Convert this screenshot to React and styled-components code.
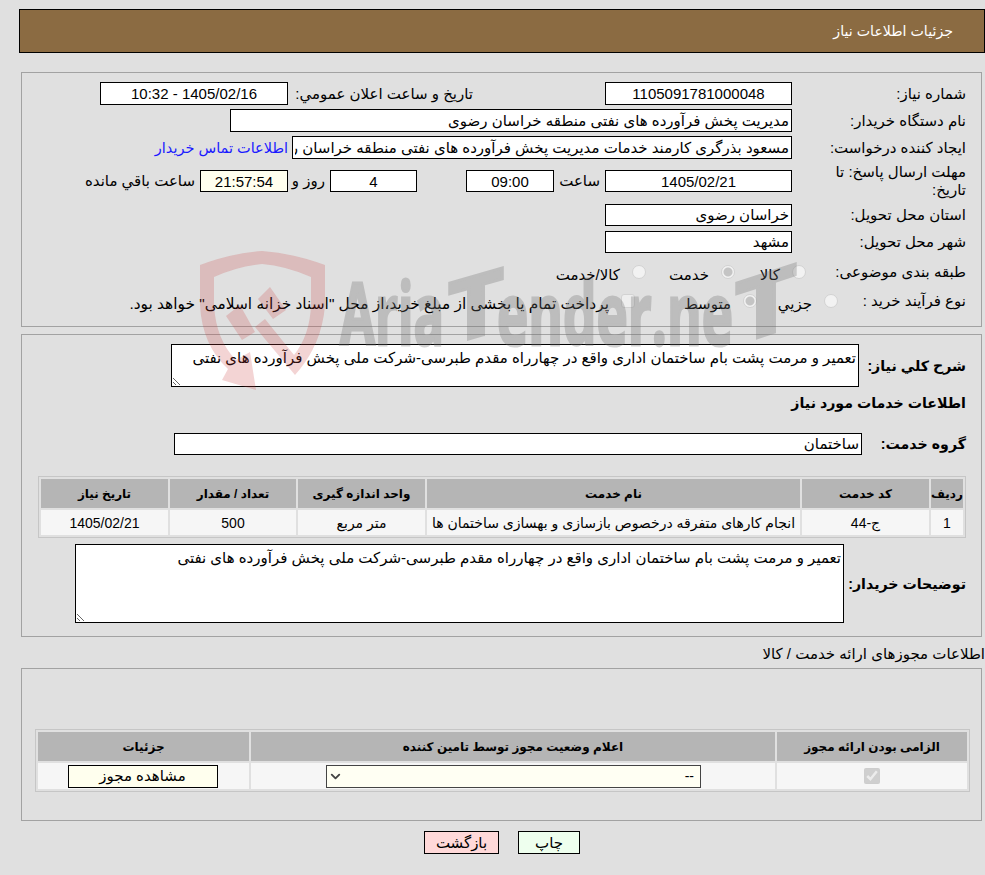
import styled, { createGlobalStyle } from "styled-components";
import { ChevronDown } from "lucide-react";

const GlobalStyle = createGlobalStyle`
  html, body {
    margin: 0;
    padding: 0;
    background: #e0e0e0;
  }
  body, input, select, textarea, button {
    font-family: "Liberation Sans", "DejaVu Sans", sans-serif;
    font-size: 15px;
    color: #000;
  }
`;

const Page = styled.div`
  position: relative;
  width: 985px;
  height: 875px;
  padding-top: 9px;
  box-sizing: border-box;
  direction: rtl;
  overflow: hidden;
`;

const Header = styled.div`
  display: flex;
  align-items: center;
  box-sizing: border-box;
  height: 44px;
  margin: 0 0 0 19px;
  width: 966px;
  padding-right: 31px;
  background: #8b6b42;
  border: 1px solid #000;
  color: #fff;
  font-size: 14.2px;
`;

const Panel = styled.div`
  box-sizing: border-box;
  width: 961px;
  margin-right: 3px;
  margin-top: ${({ $top }) => $top || 0}px;
  padding-top: ${({ $pt }) => $pt}px;
  padding-bottom: ${({ $pb }) => $pb}px;
  border: 1px solid #a2a2a2;
`;

const Row = styled.div`
  display: flex;
  align-items: center;
  min-height: ${({ $h }) => $h || 23}px;
  margin-top: ${({ $top }) => $top || 0}px;
`;

const Label = styled.div`
  flex: none;
  box-sizing: border-box;
  width: ${({ $w }) => $w || 189}px;
  padding-right: 15px;
  line-height: 18px;
  font-weight: ${({ $bold }) => ($bold ? "bold" : "normal")};
  font-size: ${({ $bold }) => ($bold ? 14.2 : 15)}px;
  white-space: ${({ $bold }) => ($bold ? "nowrap" : "normal")};
`;

const Caption = styled.div`
  flex: none;
  box-sizing: border-box;
  width: ${({ $w }) => ($w ? `${$w}px` : "auto")};
  padding-right: ${({ $start }) => $start || 5}px;
`;

const Field = styled.input`
  flex: none;
  box-sizing: border-box;
  width: ${({ $w }) => $w}px;
  height: ${({ $h }) => $h || 23}px;
  margin: 0;
  margin-right: ${({ $start }) => $start || 0}px;
  padding: 0 2px;
  border: 1px solid #000;
  border-radius: 0;
  outline: none;
  background: ${({ $tone }) => $tone || "#fff"};
  text-align: ${({ $center }) => ($center ? "center" : "right")};
`;

const Area = styled.textarea`
  flex: none;
  display: block;
  box-sizing: border-box;
  width: ${({ $w }) => $w}px;
  height: ${({ $h }) => $h}px;
  margin: 0;
  padding: 4px 2px;
  border: 1px solid #000;
  border-radius: 0;
  outline: none;
  background: #fff;
`;

const ContactLink = styled.a`
  margin-right: 4px;
  color: #1a1aff;
  font-size: 14.5px;
  text-decoration: none;
  cursor: pointer;
`;

const Choice = styled.label`
  flex: none;
  display: flex;
  align-items: center;
  width: ${({ $w }) => ($w ? `${$w}px` : "auto")};
`;

const ChoiceText = styled.span`
  margin-right: 12px;
  padding-top: 6px;
  font-size: ${({ $size }) => $size || 15}px;
`;

const Radio = styled.input.attrs({ type: "radio", disabled: true })`
  appearance: none;
  flex: none;
  width: 14px;
  height: 14px;
  margin: 0;
  border: 1px solid #d2d2d2;
  border-radius: 50%;
  background: ${({ checked }) =>
    checked ? "radial-gradient(circle, #c4c4c4 0 4px, #f2f2f2 5px)" : "#f2f2f2"};
`;

const Square = styled.input.attrs({ type: "checkbox", disabled: true })`
  appearance: none;
  flex: none;
  width: 14px;
  height: 14px;
  margin: 0;
  border: 1px solid #d2d2d2;
  border-radius: 3px;
  background: #eeeeee;
`;

const Grid = styled.table`
  box-sizing: border-box;
  width: ${({ $w }) => $w}px;
  margin-right: ${({ $side }) => $side}px;
  margin-top: ${({ $top }) => $top || 0}px;
  table-layout: fixed;
  border-collapse: separate;
  border-spacing: 2px;
  border: 1px solid #c6c6c6;
`;

const HeadCell = styled.th`
  height: 29px;
  padding: 0;
  background: #b5b5b5;
  font-size: 12px;
  font-weight: bold;
  text-align: center;
`;

const BodyCell = styled.td`
  height: ${({ $h }) => $h}px;
  padding: 0 2px;
  background: #f6f6f6;
  font-size: 14px;
  text-align: center;
  white-space: nowrap;
  overflow: hidden;
`;

const Tick = styled.input.attrs({ type: "checkbox", disabled: true, defaultChecked: true })`
  display: block;
  width: 16px;
  height: 16px;
  margin: 0 auto;
`;

const SelectBox = styled.div`
  position: relative;
  width: 375px;
  height: 23px;
  margin-right: 72px;
`;

const StatusSelect = styled.select`
  appearance: none;
  display: block;
  box-sizing: border-box;
  width: 100%;
  height: 100%;
  padding: 0 6px;
  border: 1px solid #444;
  border-radius: 0;
  background: #fffff3;
  font-size: 14px;
`;

const SelectArrow = styled(ChevronDown)`
  position: absolute;
  left: 2px;
  top: 4px;
  color: #444;
  pointer-events: none;
`;

const ActionButton = styled.button`
  flex: none;
  box-sizing: border-box;
  width: ${({ $w }) => $w}px;
  height: 23px;
  margin: 0;
  margin-right: ${({ $start }) => $start || 0}px;
  padding: 0;
  border: 1px solid #000;
  border-radius: 0;
  background: ${({ $tone }) => $tone};
  text-align: center;
`;

const LicenseTitle = styled.div`
  height: 17px;
  margin-top: 8px;
  margin-bottom: 6px;
  line-height: 17px;
`;

const Buttons = styled.div`
  display: flex;
  margin-top: 10px;
  padding-right: 405px;
`;

const Watermark = styled.svg`
  position: absolute;
  left: 195px;
  top: 245px;
  pointer-events: none;
`;

const serviceColumns = [32, 127, 373, 127, 126, 127];
const licenseColumns = [190, 524, 211];

function LogoMark() {
  return (
    <Watermark width="640" height="150" viewBox="195 245 640 150">
      <g fill="#c83c3c" fillOpacity="0.22">
        <path d="M200 265 Q232 253 262 251 Q292 253 325 265 L325 305 Q322 345 295 375 L255 327 L265 319 L294 355 Q310 335 311 305 L311 277 Q286 266 262 264 Q238 266 214 277 L214 305 Q216 340 236 360 L250 352 L256 390 L222 380 L228 369 Q202 345 200 305 Z" />
        <path d="M226 316 L240 305 L255 332 L242 340 Z" />
        <path d="M258 299 L270 287 L286 310 L273 319 Z" />
      </g>
      <g
        fill="#6e6e6e"
        stroke="#6e6e6e"
        strokeWidth="3"
        opacity="0.3"
        fontFamily="'Open Sans', sans-serif"
        fontWeight="700"
        fontSize="86"
      >
        <text direction="ltr" x="340" y="345" textLength="104" lengthAdjust="spacingAndGlyphs">
          Aria
        </text>
        <text
          direction="ltr"
          x="448"
          y="345"
          textLength="56"
          lengthAdjust="spacingAndGlyphs"
          transform="translate(448 345) skewY(-16) translate(-448 -345)"
        >
          T
        </text>
        <text direction="ltr" x="497" y="345" textLength="236" lengthAdjust="spacingAndGlyphs">
          ender.ne
        </text>
        <text
          direction="ltr"
          x="735"
          y="345"
          textLength="62"
          lengthAdjust="spacingAndGlyphs"
          transform="translate(735 345) skewY(-18) translate(-735 -345)"
        >
          T
        </text>
      </g>
    </Watermark>
  );
}

export default function App() {
  return (
    <Page>
      <GlobalStyle />
      <Header>جزئیات اطلاعات نیاز</Header>

      <Panel $top={19} $pt={9} $pb={13}>
        <Row>
          <Label>شماره نیاز:</Label>
          <Field $w={187} $center readOnly value="1105091781000048" />
          <Caption $w={317} $start={132}>تاریخ و ساعت اعلان عمومي:</Caption>
          <Field $w={188} $center readOnly value="1405/02/16 - 10:32" />
        </Row>
        <Row $top={4}>
          <Label>نام دستگاه خریدار:</Label>
          <Field $w={562} readOnly value="مدیریت پخش فرآورده های نفتی منطقه خراسان رضوی" />
        </Row>
        <Row $top={4}>
          <Label>ایجاد کننده درخواست:</Label>
          <Field $w={500} readOnly value="مسعود بذرگری کارمند خدمات مدیریت پخش فرآورده های نفتی منطقه خراسان رضوی" />
          <ContactLink>اطلاعات تماس خریدار</ContactLink>
        </Row>
        <Row $top={4} $h={36}>
          <Label>مهلت ارسال پاسخ: تا<br />تاریخ:</Label>
          <Field $w={187} $h={22} $center readOnly value="1405/02/21" />
          <Caption $w={51}>ساعت</Caption>
          <Field $w={88} $h={22} $center readOnly value="09:00" />
          <Field $w={87} $h={22} $start={49} $center readOnly value="4" />
          <Caption $w={42}>روز و</Caption>
          <Field $w={88} $h={22} $center $tone="#ffffee" readOnly value="21:57:54" />
          <Caption>ساعت باقي مانده</Caption>
        </Row>
        <Row $top={5} $h={22}>
          <Label>استان محل تحویل:</Label>
          <Field $w={187} $h={22} readOnly value="خراسان رضوی" />
        </Row>
        <Row $top={5} $h={22}>
          <Label>شهر محل تحویل:</Label>
          <Field $w={187} $h={22} readOnly value="مشهد" />
        </Row>
        <Row $top={7} $h={24}>
          <Label $w={175}>طبقه بندی موضوعی:</Label>
          <Choice $w={71}><Radio /><ChoiceText>کالا</ChoiceText></Choice>
          <Choice $w={89}><Radio checked readOnly /><ChoiceText>خدمت</ChoiceText></Choice>
          <Choice><Radio /><ChoiceText>کالا/خدمت</ChoiceText></Choice>
        </Row>
        <Row $top={5} $h={24}>
          <Label $w={143}>نوع فرآیند خرید :</Label>
          <Choice $w={81}><Radio /><ChoiceText>جزيي</ChoiceText></Choice>
          <Choice $w={122}><Radio checked readOnly /><ChoiceText>متوسط</ChoiceText></Choice>
          <Choice>
            <Square />
            <ChoiceText $size={15.4}>پرداخت تمام یا بخشی از مبلغ خرید،از محل "اسناد خزانه اسلامی" خواهد بود.</ChoiceText>
          </Choice>
        </Row>
      </Panel>

      <Panel $top={7} $pt={9} $pb={13}>
        <Row>
          <Label $w={122} $bold>شرح کلي نیاز:</Label>
          <Area
            $w={688}
            $h={43}
            readOnly
            value="تعمیر و مرمت پشت بام ساختمان اداری واقع در چهارراه مقدم طبرسی-شرکت ملی پخش فرآورده های نفتی"
          />
        </Row>
        <Row $top={6} $h={20}>
          <Label $w={300} $bold>اطلاعات خدمات مورد نیاز</Label>
        </Row>
        <Row $top={20} $h={22}>
          <Label $w={119} $bold>گروه خدمت:</Label>
          <Field $w={688} $h={22} readOnly value="ساختمان" />
        </Row>
        <Grid $w={928} $side={15} $top={21}>
          <colgroup>
            {serviceColumns.map((width, i) => (
              <col key={i} style={{ width }} />
            ))}
          </colgroup>
          <thead>
            <tr>
              <HeadCell>ردیف</HeadCell>
              <HeadCell>کد خدمت</HeadCell>
              <HeadCell>نام خدمت</HeadCell>
              <HeadCell>واحد اندازه گیری</HeadCell>
              <HeadCell>تعداد / مقدار</HeadCell>
              <HeadCell>تاریخ نیاز</HeadCell>
            </tr>
          </thead>
          <tbody>
            <tr>
              <BodyCell $h={25}>1</BodyCell>
              <BodyCell $h={25}>ج-44</BodyCell>
              <BodyCell $h={25}>انجام کارهای متفرقه درخصوص بازسازی و بهسازی ساختمان ها</BodyCell>
              <BodyCell $h={25}>متر مربع</BodyCell>
              <BodyCell $h={25}>500</BodyCell>
              <BodyCell $h={25}>1405/02/21</BodyCell>
            </tr>
          </tbody>
        </Grid>
        <Row $top={6}>
          <Label $w={137} $bold>توضیحات خریدار:</Label>
          <Area
            $w={769}
            $h={79}
            readOnly
            value="تعمیر و مرمت پشت بام ساختمان اداری واقع در چهارراه مقدم طبرسی-شرکت ملی پخش فرآورده های نفتی"
          />
        </Row>
      </Panel>

      <LicenseTitle>اطلاعات مجوزهای ارائه خدمت / کالا</LicenseTitle>

      <Panel $pt={60} $pb={28}>
        <Grid $w={935} $side={11}>
          <colgroup>
            {licenseColumns.map((width, i) => (
              <col key={i} style={{ width }} />
            ))}
          </colgroup>
          <thead>
            <tr>
              <HeadCell>الزامی بودن ارائه مجوز</HeadCell>
              <HeadCell>اعلام وضعیت مجوز توسط تامین کننده</HeadCell>
              <HeadCell>جزئیات</HeadCell>
            </tr>
          </thead>
          <tbody>
            <tr>
              <BodyCell $h={26}><Tick /></BodyCell>
              <BodyCell $h={26}>
                <SelectBox>
                  <StatusSelect defaultValue="--">
                    <option>--</option>
                  </StatusSelect>
                  <SelectArrow size={15} strokeWidth={3} />
                </SelectBox>
              </BodyCell>
              <BodyCell $h={26}>
                <ActionButton $w={150} $start={2} $tone="#ffffee">مشاهده مجوز</ActionButton>
              </BodyCell>
            </tr>
          </tbody>
        </Grid>
      </Panel>

      <Buttons>
        <ActionButton $w={62} $tone="#eeffee">چاپ</ActionButton>
        <ActionButton $w={75} $start={19} $tone="#ffd9d9">بازگشت</ActionButton>
      </Buttons>

      <LogoMark />
    </Page>
  );
}
